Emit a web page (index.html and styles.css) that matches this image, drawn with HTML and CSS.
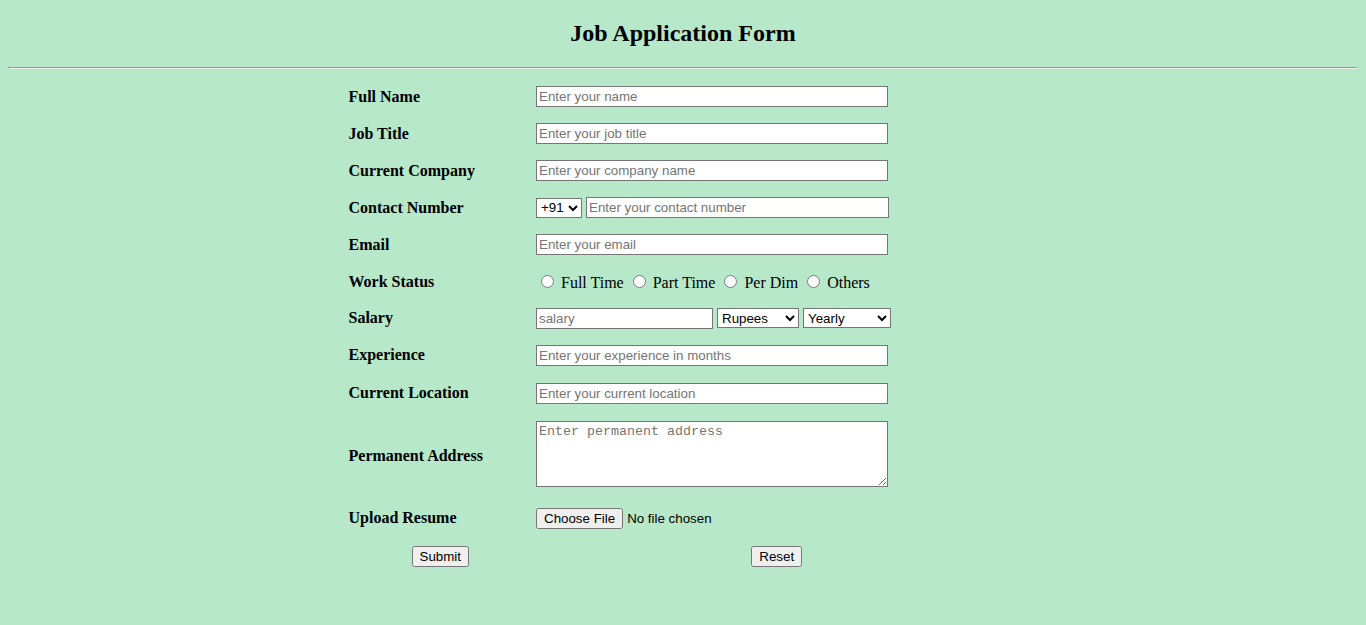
FILE: index.html
```html
<!DOCTYPE html>
<html>
<head>
<meta charset="utf-8">
<title>Job Application Form</title>
<link rel="stylesheet" href="styles.css">
</head>
<body>
<h2 class="title">Job Application Form</h2>
<hr class="rule">
<form class="form">
<table class="grid">
  <tr class="row">
    <td class="label">Full Name</td>
    <td class="field"><input class="text wide" type="text" placeholder="Enter your name"></td>
  </tr>
  <tr class="row">
    <td class="label">Job Title</td>
    <td class="field"><input class="text wide" type="text" placeholder="Enter your job title"></td>
  </tr>
  <tr class="row">
    <td class="label">Current Company</td>
    <td class="field"><input class="text wide" type="text" placeholder="Enter your company name"></td>
  </tr>
  <tr class="row">
    <td class="label">Contact Number</td>
    <td class="field"><select class="sel code"><option>+91</option></select> <input class="text phone" type="text" placeholder="Enter your contact number"></td>
  </tr>
  <tr class="row">
    <td class="label">Email</td>
    <td class="field"><input class="text wide" type="email" placeholder="Enter your email"></td>
  </tr>
  <tr class="row">
    <td class="label">Work Status</td>
    <td class="field radios"><input class="radio" type="radio" name="ws"> Full Time <input class="radio" type="radio" name="ws"> Part Time <input class="radio" type="radio" name="ws"> Per Dim <input class="radio" type="radio" name="ws"> Others</td>
  </tr>
  <tr class="row short">
    <td class="label">Salary</td>
    <td class="field"><input class="text salary" type="text" placeholder="salary"> <select class="sel currency"><option>Rupees</option></select> <select class="sel period"><option>Yearly</option></select></td>
  </tr>
  <tr class="row tall">
    <td class="label">Experience</td>
    <td class="field"><input class="text wide" type="text" placeholder="Enter your experience in months"></td>
  </tr>
  <tr class="row tall">
    <td class="label">Current Location</td>
    <td class="field"><input class="text wide" type="text" placeholder="Enter your current location"></td>
  </tr>
  <tr class="row address">
    <td class="label">Permanent Address</td>
    <td class="field"><textarea class="area" rows="4" placeholder="Enter permanent address"></textarea></td>
  </tr>
  <tr class="row upload">
    <td class="label">Upload Resume</td>
    <td class="field"><input class="file" type="file"></td>
  </tr>
  <tr class="row actions">
    <td class="center"><button class="btn" type="submit">Submit</button></td>
    <td class="center"><button class="btn" type="reset">Reset</button></td>
  </tr>
</table>
</form>
</body>
</html>
```
FILE: styles.css
```css
html, body {
  background: #b6e8c9;
}
body {
  margin: 0 8px 8px;
  font-family: "Liberation Serif", "Times New Roman", serif;
  font-size: 16px;
  color: #000;
}
.title {
  text-align: center;
  font-size: 24px;
  font-weight: bold;
  margin: 20px 0 20px;
}
.rule {
  margin: 0 0 8px;
}
.grid {
  width: 50%;
  margin: 0 auto;
  border-spacing: 2px;
}
.grid td {
  padding: 0 1px;
  height: 35px;
  vertical-align: middle;
}
.grid .short td { height: 34px; }
.grid .tall td { height: 36px; }
.grid .address td { height: 82px; }
.grid .address .label { padding-top: 3px; height: 79px; box-sizing: content-box; }
.grid .upload td { height: 42px; }
.grid .actions td { height: 30px; }
.label {
  width: 183.5px;
  font-weight: bold;
}
.center {
  text-align: center;
}
.text, .sel, .area, .file, .btn {
  font-family: "Liberation Sans", Arial, sans-serif;
  font-size: 13.333px;
}
.text {
  box-sizing: border-box;
  height: 21px;
  padding: 1px 2px;
  border: 1px solid #767676;
  border-radius: 0;
  background: #fff;
  margin: 0;
}
.text::placeholder, .area::placeholder {
  color: #757575;
}
.wide { width: 352px; }
.phone { width: 303px; }
.salary { width: 177px; }
.sel {
  box-sizing: border-box;
  height: 20px;
  margin: 0;
  border: 1px solid #767676;
  border-radius: 0;
  background: #fff;
  color: #000;
}
.code { width: 46px; }
.currency { width: 82px; }
.period { width: 88px; }
.radios {
  font-family: "Liberation Serif", "Times New Roman", serif;
}
.radio {
  margin: 3px 3px 0 5px;
}
.area {
  box-sizing: border-box;
  width: 352px;
  height: 66px;
  font-family: "Liberation Mono", "Courier New", monospace;
  font-size: 13.333px;
  padding: 2px;
  border: 1px solid #767676;
  margin: 0;
  vertical-align: bottom;
}
.file {
  margin: 0;
}
.btn {
  margin: 0;
}
```
